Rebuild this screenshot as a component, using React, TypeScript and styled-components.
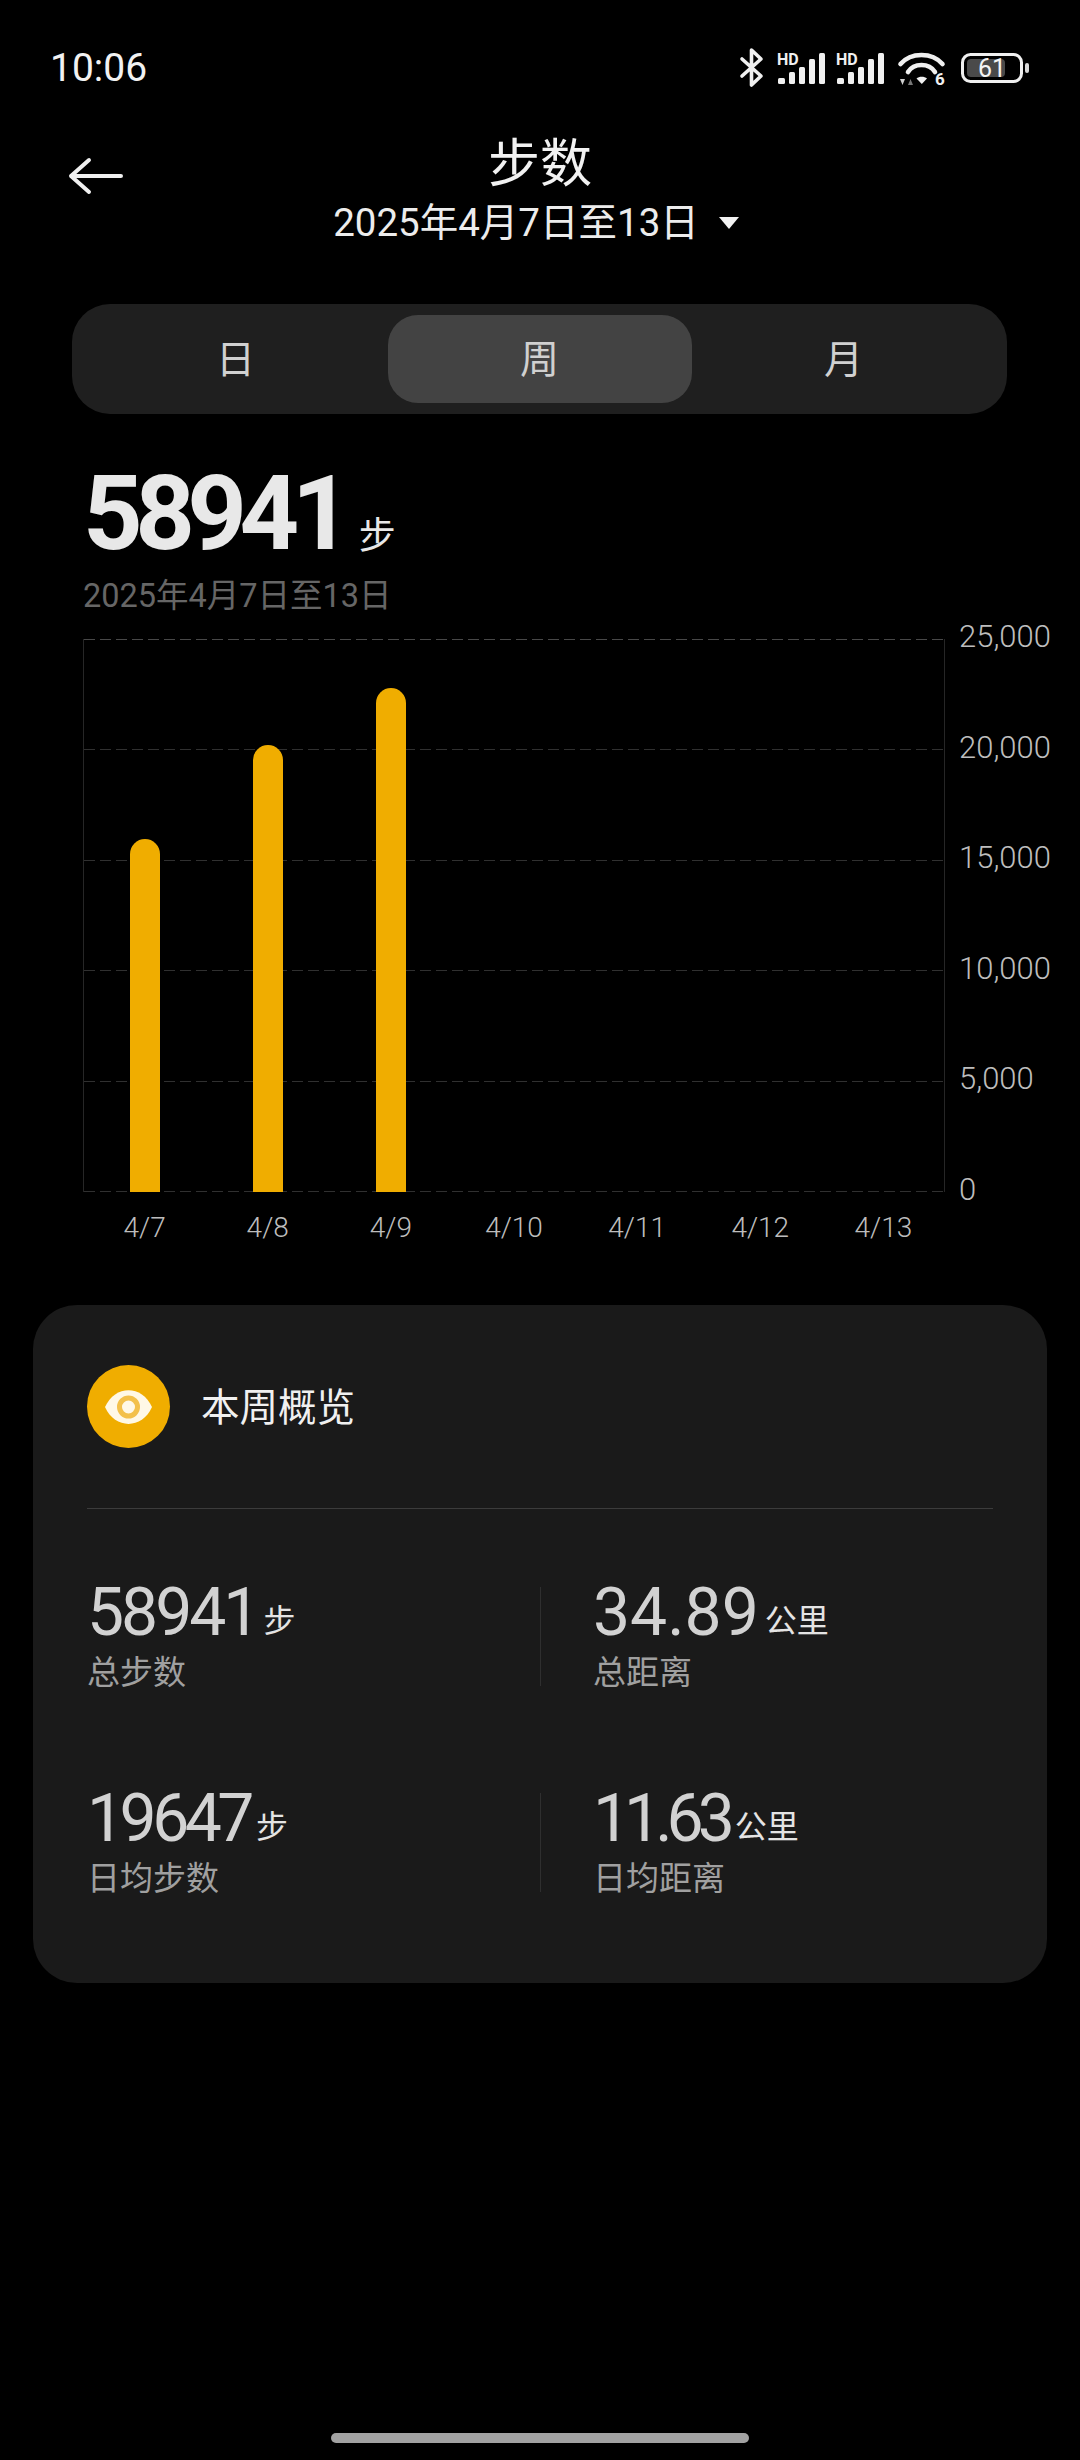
import styled, { createGlobalStyle } from "styled-components";

const FONT = `Roboto, "Noto Sans CJK SC", sans-serif`;

const GlobalStyle = createGlobalStyle`
  html, body {
    margin: 0;
    padding: 0;
    background: #000;
  }
  * {
    box-sizing: border-box;
  }
`;

const Page = styled.div`
  width: 1080px;
  height: 2460px;
  background: #000;
  font-family: ${FONT};
  display: flex;
  flex-direction: column;
  overflow: hidden;
`;

const StatusBar = styled.div`
  height: 131px;
  padding: 47px 51px 0 50px;
  display: flex;
  justify-content: space-between;
  align-items: flex-start;
`;

const Clock = styled.span`
  font-size: 39px;
  line-height: 42px;
  color: #f2f2f2;
`;

const StatusIcons = styled.div`
  display: flex;
  align-items: flex-start;
  margin-top: 1px;
`;

const Header = styled.header`
  display: grid;
  grid-template-columns: 1fr auto 1fr;
`;

const BackButton = styled.div`
  padding: 26px 0 0 68px;
`;

const TitleBlock = styled.div`
  display: flex;
  flex-direction: column;
  align-items: center;
`;

const Title = styled.h1`
  margin: 3px 0 0;
  font-size: 52px;
  line-height: 62px;
  font-weight: 400;
  color: #f2f2f2;
`;

const RangePicker = styled.div`
  display: flex;
  align-items: center;
  gap: 20px;
  margin-top: 4px;
  padding-right: 8px;
  font-size: 38.5px;
  line-height: 46px;
  color: #ececec;
`;

const Caret = styled.span`
  width: 0;
  height: 0;
  border-left: 10px solid transparent;
  border-right: 10px solid transparent;
  border-top: 12px solid #f2f2f2;
`;

const Tabs = styled.div`
  margin: 58px 0 0 72px;
  width: 935px;
  height: 110px;
  background: #1f1f1f;
  border-radius: 38px;
  display: grid;
  grid-template-columns: repeat(3, 304px);
  justify-content: center;
  align-items: center;
`;

const Tab = styled.div<{ $active?: boolean }>`
  height: 88px;
  padding-bottom: 6px;
  border-radius: 30px;
  background: ${(p) => (p.$active ? "#434343" : "transparent")};
  color: #d0d0d0;
  font-size: 39px;
  display: flex;
  align-items: center;
  justify-content: center;
`;

const Summary = styled.section`
  margin: 52px 0 0 83px;
`;

const Total = styled.div`
  display: flex;
  align-items: baseline;
  gap: 15px;
  height: 96px;
  color: #e8e8e8;
`;

const TotalNumber = styled.span`
  font-size: 104px;
  line-height: 96px;
  font-weight: 700;
  letter-spacing: -7.5px;
`;

const TotalUnit = styled.span`
  font-size: 37px;
  line-height: 40px;
`;

const TotalRange = styled.div`
  margin-top: 14px;
  font-size: 32.5px;
  line-height: 40px;
  color: #666;
`;

const Chart = styled.section`
  margin: 23px 0 0 83px;
  height: 553px;
  display: grid;
  grid-template-columns: 862px 1fr;
`;

const Plot = styled.div`
  position: relative;
  height: 553px;
  border-left: 1px solid #262626;
  border-right: 1px solid #262626;
  display: grid;
  grid-template-columns: repeat(7, 1fr);
  align-items: end;
  justify-items: center;
`;

const GridLines = styled.div`
  position: absolute;
  inset: 0;
  display: flex;
  flex-direction: column;
  justify-content: space-between;
`;

const GridLine = styled.div<{ $strong?: boolean }>`
  height: 1px;
  background: repeating-linear-gradient(
    to right,
    ${(p) => (p.$strong ? "#484848" : "#303030")} 0 11px,
    transparent 11px 16px
  );
`;

const Bar = styled.div`
  position: relative;
  width: 30px;
  background: #f0ad00;
  border-radius: 15px 15px 0 0;
`;

const YAxis = styled.div`
  height: 589px;
  margin-top: -20px;
  padding-left: 14px;
  display: flex;
  flex-direction: column;
  justify-content: space-between;
`;

const AxisLabel = styled.span`
  font-size: 31px;
  line-height: 36px;
  font-weight: 300;
  color: #bdbdbd;
`;

const XAxis = styled.div`
  margin: 18px 0 0 83px;
  width: 862px;
  display: grid;
  grid-template-columns: repeat(7, 1fr);
  text-align: center;
`;

const XLabel = styled(AxisLabel)`
  font-size: 28px;
`;

const Card = styled.section`
  margin: 59px 0 0 33px;
  width: 1014px;
  height: 678px;
  background: #1a1a1a;
  border-radius: 44px;
  padding: 60px 54px 0;
`;

const CardHeader = styled.div`
  display: flex;
  align-items: center;
  gap: 31px;
`;

const EyeBadge = styled.div`
  width: 83px;
  height: 83px;
  border-radius: 50%;
  background: #f0ad00;
  display: flex;
  align-items: center;
  justify-content: center;
`;

const CardTitle = styled.h2`
  margin: 0 0 6px;
  font-size: 38.5px;
  font-weight: 400;
  color: #f0f0f0;
`;

const Divider = styled.div`
  margin-top: 60px;
  height: 1px;
  background: #3c3c3c;
`;

const StatGrid = styled.div`
  margin-top: 78px;
  display: grid;
  grid-template-columns: 453px 1fr;
  row-gap: 107px;
`;

const Stat = styled.div<{ $right?: boolean }>`
  height: 99px;
  padding-left: ${(p) => (p.$right ? "52px" : "0")};
  border-left: ${(p) => (p.$right ? "1px solid #2f2f2f" : "none")};
`;

const StatValue = styled.div`
  display: flex;
  align-items: baseline;
  gap: 6px;
  height: 58px;
  margin-top: -3px;
`;

const StatNumber = styled.span<{ $tracking: number }>`
  font-size: 66px;
  line-height: 58px;
  font-weight: 400;
  letter-spacing: ${(p) => p.$tracking}px;
  color: #d2d2d2;
`;

const StatUnit = styled.span`
  font-size: 32px;
  line-height: 36px;
  color: #e4e4e4;
  transform: translateY(-3px);
`;

const StatLabel = styled.div`
  margin-top: 11px;
  font-size: 33px;
  line-height: 40px;
  color: #a0a0a0;
`;

const HomeIndicator = styled.div`
  position: absolute;
  top: 2433px;
  left: 331px;
  width: 418px;
  height: 10px;
  border-radius: 5px;
  background: #a2a2a2;
`;

const SvgText = styled.text`
  font-family: Roboto, sans-serif;
`;

const Glyph = styled.svg<{ $top?: number; $right?: number }>`
  display: block;
  overflow: visible;
  margin-top: ${(p) => p.$top ?? 0}px;
  margin-right: ${(p) => p.$right ?? 0}px;
`;

function Signal({ right }: { right: number }) {
  const bars = [
    { x: 1, top: 25, w: 7 },
    { x: 12, top: 19, w: 6 },
    { x: 22, top: 14, w: 6 },
    { x: 32, top: 6, w: 6 },
    { x: 42, top: 0, w: 6 },
  ];
  return (
    <Glyph width="49" height="31" viewBox="0 0 49 31" $top={5} $right={right}>
      <SvgText x="0" y="11.5" fontSize="16" fontWeight="700" fill="#f0f0f0">
        HD
      </SvgText>
      {bars.map((b) => (
        <rect key={b.x} x={b.x} y={b.top} width={b.w} height={31 - b.top} rx="1.5" fill="#f0f0f0" />
      ))}
    </Glyph>
  );
}

function StatusGlyphs() {
  return (
    <StatusIcons>
      <Glyph width="23" height="39" viewBox="0 0 23 39" $right={14}>
        <path
          d="M2 11 L21 28 L11.5 37 L11.5 2 L21 11 L2 28"
          fill="none"
          stroke="#f0f0f0"
          strokeWidth="3.6"
          strokeLinejoin="round"
          strokeLinecap="round"
        />
      </Glyph>
      <Signal right={10} />
      <Signal right={13} />
      <Glyph width="47" height="34" viewBox="0 0 47 34" $top={4} $right={16}>
        <g fill="none" stroke="#f0f0f0" strokeWidth="4.6" strokeLinecap="round">
          <path d="M2.5 12 C 13 0, 34 0, 44.5 12" />
          <path d="M10 20 C 16 10.7, 31 10.7, 37 20" />
        </g>
        <path d="M18.5 26.5 C 21 24, 26.5 24, 29 26.5 L23.8 32 Z" fill="#f0f0f0" />
        <path d="M2 27 l5 0 l-2.5 6 Z" fill="#cfcfcf" />
        <path d="M10 33 l5 0 l-2.5 -6 Z" fill="#777" />
        <SvgText x="37" y="33" fontSize="17" fontWeight="700" fill="#f0f0f0">
          6
        </SvgText>
      </Glyph>
      <Glyph width="68" height="30" viewBox="0 0 68 30" $top={5}>
        <rect x="1.5" y="1.5" width="59" height="27" rx="8" fill="none" stroke="#f0f0f0" strokeWidth="3" />
        <rect x="6" y="6" width="38" height="18" rx="4" fill="#4a4a4a" />
        <rect x="64" y="10" width="4" height="10" rx="2" fill="#d8d8d8" />
        <SvgText x="31" y="24" fontSize="25" textAnchor="middle" fill="#f4f4f4">
          61
        </SvgText>
      </Glyph>
    </StatusIcons>
  );
}

const DAYS = [
  { label: "4/7", steps: 15960 },
  { label: "4/8", steps: 20205 },
  { label: "4/9", steps: 22776 },
  { label: "4/10", steps: 0 },
  { label: "4/11", steps: 0 },
  { label: "4/12", steps: 0 },
  { label: "4/13", steps: 0 },
];

const TICKS = ["25,000", "20,000", "15,000", "10,000", "5,000", "0"];
const MAX_STEPS = 25000;
const PLOT_HEIGHT = 553;

// tracking evens out the tabular digits against the reference's proportional ones
const STATS = [
  { value: "58941", unit: "步", label: "总步数", tracking: -3 },
  { value: "34.89", unit: "公里", label: "总距离", tracking: 0 },
  { value: "19647", unit: "步", label: "日均步数", tracking: -4.5 },
  { value: "11.63", unit: "公里", label: "日均距离", tracking: -6 },
];

export default function App() {
  return (
    <Page>
      <GlobalStyle />
      <StatusBar>
        <Clock>10:06</Clock>
        <StatusGlyphs />
      </StatusBar>

      <Header>
        <BackButton>
          <svg width="56" height="38" viewBox="0 0 56 38">
            <path
              d="M21 3 L3 19 L21 35 M3 19 L53 19"
              fill="none"
              stroke="#f0f0f0"
              strokeWidth="4"
              strokeLinecap="round"
              strokeLinejoin="round"
            />
          </svg>
        </BackButton>
        <TitleBlock>
          <Title>步数</Title>
          <RangePicker>
            2025年4月7日至13日
            <Caret />
          </RangePicker>
        </TitleBlock>
      </Header>

      <Tabs>
        <Tab>日</Tab>
        <Tab $active>周</Tab>
        <Tab>月</Tab>
      </Tabs>

      <Summary>
        <Total>
          <TotalNumber>58941</TotalNumber>
          <TotalUnit>步</TotalUnit>
        </Total>
        <TotalRange>2025年4月7日至13日</TotalRange>
      </Summary>

      <Chart>
        <Plot>
          <GridLines>
            {TICKS.map((t, i) => (
              <GridLine key={t} $strong={i === 0} />
            ))}
          </GridLines>
          {DAYS.map((d) => (
            <Bar key={d.label} style={{ height: (d.steps / MAX_STEPS) * PLOT_HEIGHT }} />
          ))}
        </Plot>
        <YAxis>
          {TICKS.map((t) => (
            <AxisLabel key={t}>{t}</AxisLabel>
          ))}
        </YAxis>
      </Chart>
      <XAxis>
        {DAYS.map((d) => (
          <XLabel key={d.label}>{d.label}</XLabel>
        ))}
      </XAxis>

      <Card>
        <CardHeader>
          <EyeBadge>
            <svg width="47" height="34" viewBox="0 0 47 34">
              <path d="M0 17 C 10 -5.5, 37 -5.5, 47 17 C 37 39.5, 10 39.5, 0 17 Z" fill="#fff8e6" />
              <circle cx="23.5" cy="17" r="9" fill="none" stroke="#f3c04a" strokeWidth="5" />
            </svg>
          </EyeBadge>
          <CardTitle>本周概览</CardTitle>
        </CardHeader>
        <Divider />
        <StatGrid>
          {STATS.map((s, i) => (
            <Stat key={s.label} $right={i % 2 === 1}>
              <StatValue>
                <StatNumber $tracking={s.tracking}>{s.value}</StatNumber>
                <StatUnit>{s.unit}</StatUnit>
              </StatValue>
              <StatLabel>{s.label}</StatLabel>
            </Stat>
          ))}
        </StatGrid>
      </Card>

      <HomeIndicator />
    </Page>
  );
}
